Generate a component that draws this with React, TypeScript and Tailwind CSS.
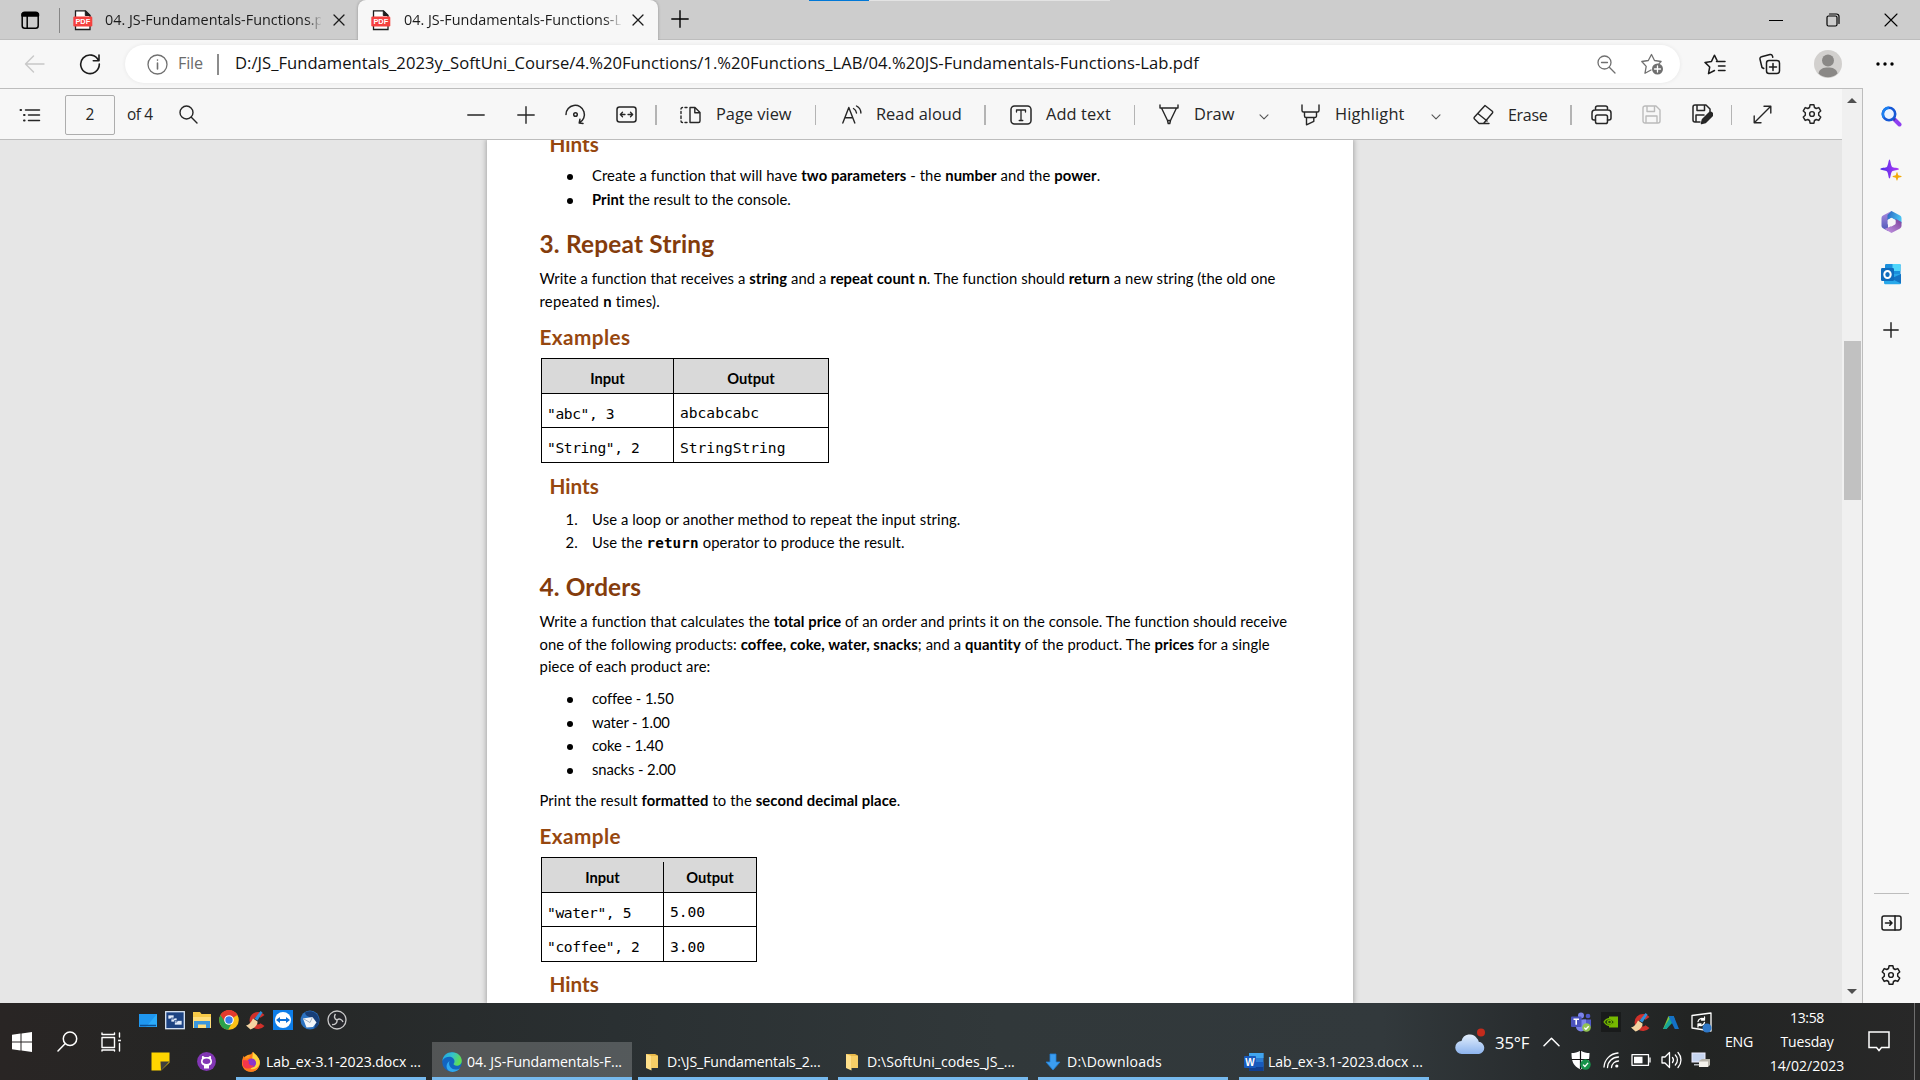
import type { ReactNode } from "react";

type IconProps = { w?: number; h?: number; vb?: string; className?: string; sw?: number; children: ReactNode };

/* Outline icon: strokes take the current text colour. */
function Line({ w = 20, h = 20, vb, className = "", sw = 1.4, children }: IconProps) {
  return (
    <svg width={w} height={h} viewBox={vb ?? `0 0 ${w} ${h}`} fill="none" stroke="currentColor" strokeWidth={sw} strokeLinecap="round" strokeLinejoin="round" className={`shrink-0 ${className}`}>
      {children}
    </svg>
  );
}

/* Filled, multi-colour icon. */
function Art({ w = 20, h = 20, vb, className = "", children }: IconProps) {
  return (
    <svg width={w} height={h} viewBox={vb ?? `0 0 ${w} ${h}`} className={`shrink-0 ${className}`}>
      {children}
    </svg>
  );
}

function PdfIcon({ className = "" }: { className?: string }) {
  return (
    <Art w={20} h={21} className={className}>
      <path d="M2.500 .8h10l4.500 4.500v14.200h-14.500z" fill="#fff" stroke="#1d1d1d" strokeWidth="1.300" />
      <path d="M12.300 .8v4.700h4.700z" fill="#1d1d1d" stroke="#1d1d1d" />
      <rect x="0.300" y="6.500" width="19" height="10" rx="1.200" fill="#f5413f" />
      <text x="9.800" y="14.200" textAnchor="middle" fontSize="7.400" fontWeight="700" fontFamily="Liberation Sans, sans-serif" fill="#fff">PDF</text>
    </Art>
  );
}

function Cross({ className = "" }: { className?: string }) {
  return (
    <Line w={12} h={12} sw={1.3} className={className}>
      <path d="M1 1l10 10M11 1L1 11" />
    </Line>
  );
}

function Gear({ className = "" }: { className?: string }) {
  return (
    <Line w={22} h={22} vb="0 0 24 24" sw={1.6} className={className}>
      <path d="M9.900 2h4.200l.6 2.900 1.900 1.100 2.800-1 2.100 3.700-2.200 1.900v2.800l2.200 1.900-2.100 3.700-2.800-1-1.900 1.100-.6 2.900H9.900l-.6-2.900-1.900-1.100-2.800 1-2.100-3.700 2.200-1.900v-2.800L2.500 8.700 4.600 5l2.800 1 1.900-1.100z" />
      <circle cx="12" cy="12" r="2.600" />
    </Line>
  );
}

function Tabs() {
  return (
    <div className="flex h-10 w-full bg-[#cdcdcd] shadow-[inset_0_-1px_0_#bdbdbd]">
      <div className="flex h-10 w-[358px] items-center">
        <Line w={19} h={19} className="ml-[21px]" sw={1.5}>
          <rect x="1.200" y="1.200" width="16" height="16" rx="2.500" />
          <path d="M1.500 3.200h15.500M1.500 4.500h15.500" strokeWidth="2.600" />
          <path d="M6.200 5v12" />
        </Line>
        <div className="ml-[19px] h-[25px] w-px bg-[#868686]" />
        <PdfIcon className="ml-[13px]" />
        <div className="ml-[12px] w-[216px] overflow-hidden whitespace-nowrap bg-linear-to-r from-[#1b1b1b] from-93% to-[#bdbdbd] to-100% bg-clip-text text-[14.4px] text-transparent">04. JS-Fundamentals-Functions.pdf</div>
        <Cross className="ml-[12px] text-[#1b1b1b]" />
      </div>
      <div className="flex h-10 w-[300px] items-center rounded-t-[8px] bg-[#f7f7f7] shadow-[0_0_3px_rgba(0,0,0,0.300)] [clip-path:inset(-4px_-4px_0_-4px)]">
        <PdfIcon className="ml-[13px]" />
        <div className="ml-[13px] w-[217px] overflow-hidden whitespace-nowrap bg-linear-to-r from-[#1b1b1b] from-92% to-[#e7e7e7] to-100% bg-clip-text text-[14.4px] text-transparent">04. JS-Fundamentals-Functions-Lab.pdf</div>
        <Cross className="ml-[11px] text-[#1b1b1b]" />
      </div>
      <Line w={18} h={18} className="ml-[13px] mt-[10px]" sw={1.4}>
        <path d="M9 .8v16.400M.8 9h16.400" />
      </Line>
      <div className="ml-[120px] h-px w-[60px] bg-[#0078d7]" />
      <div className="h-px w-[241px] bg-[#e3e3e3]" />
      <div className="ml-auto mr-[22px] flex items-center">
        <div className="h-px w-[14px] bg-black" />
        <Line w={14} h={14} className="ml-[43px]" sw={1.2}>
          <rect x="1" y="3" width="10" height="10" rx="1.500" />
          <path d="M3.500 1h7a2.500 2.500 0 0 1 2.500 2.500v7" />
        </Line>
        <Line w={14} h={14} className="ml-[44px]" sw={1.1}>
          <path d="M1 1l12 12M13 1L1 13" />
        </Line>
      </div>
    </div>
  );
}

function AddressRow() {
  return (
    <div className="flex h-[48px] items-center bg-[#f7f7f7]">
      <Line w={21} h={18} className="ml-[24px] text-[#c8c8c8]" sw={1.4}>
        <path d="M20 9H1.500M9.500 1L1.500 9l8 8" />
      </Line>
      <Line w={22} h={22} className="ml-[34px] text-[#1b1b1b]" sw={1.6}>
        <path d="M19.500 7.500A9.300 9.300 0 1 0 20.300 11M20 2v5.700h-5.700" />
      </Line>
      <div className="ml-[24px] flex h-[38px] w-[1555px] items-center rounded-full bg-white shadow-[0_0_4px_rgba(0,0,0,0.070)]">
        <Line w={21} h={21} className="ml-[22px] text-[#707070]" sw={1.3}>
          <circle cx="10.500" cy="10.500" r="9.500" />
          <path d="M10.500 9v6M10.500 6v.1" strokeWidth="1.600" />
        </Line>
        <span className="-mt-px ml-[10px] w-[26px] text-[16.2px] tracking-[-0.2px] text-[#6b6b6b]">File</span>
        <div className="ml-[13px] h-[21px] w-[2px] bg-[#8c8c8c]" />
        <span className="-mt-px ml-[16px] whitespace-nowrap text-[16.6px] tracking-[0.022px] text-[#111]">D:/JS_Fundamentals_2023y_SoftUni_Course/4.%20Functions/1.%20Functions_LAB/04.%20JS-Fundamentals-Functions-Lab.pdf</span>
        <Line w={19} h={19} className="ml-auto mr-[25px] text-[#707070]" sw={1.3}>
          <circle cx="7.500" cy="7.500" r="6.500" />
          <path d="M4.500 7.500h6M12.300 12.300l5.700 5.700" />
        </Line>
        <Line w={23} h={22} className="mr-[16px] text-[#707070]" sw={1.3}>
          <path d="M10 17l-6 3.200 1.200-6.800L.8 8.500l6.500-1L10.500 1.500l3 6 6.600 1-2 2" />
          <circle cx="16.500" cy="16" r="5.500" fill="#707070" stroke="none" />
          <path d="M16.500 13v6M13.500 16h6" stroke="#fff" />
        </Line>
      </div>
      <Line w={22} h={21} className="ml-[24px] text-[#1b1b1b]" sw={1.5}>
        <path d="M12.500 7.500h8.500M14.500 12h6.500M14.500 16.500h6.500M10.500 16.500l-6 3.200 1.200-6.700-4.700-4.600 6.500-1L10.400 1.200l2.600 5.200" />
      </Line>
      <Line w={22} h={22} className="ml-[33px] text-[#1b1b1b]" sw={1.5}>
        <rect x="7.500" y="7.500" width="13" height="13" rx="2.500" />
        <path d="M14 10.500v7M10.500 14h7M4.800 15.500L3 14.500 1 6.200a2 2 0 0 1 1.500-2.400l8.500-2.300a2 2 0 0 1 2.400 1.400l.4 1.400" />
      </Line>
      <Art w={28} h={28} className="ml-[33px]">
        <circle cx="14" cy="14" r="14" fill="#d2d0ce" />
        <circle cx="14" cy="10.500" r="6" fill="#8a8886" />
        <path d="M4.500 23.500c1-5 5-6 9.500-6s8.500 1 9.500 6a14 14 0 0 1-19 0z" fill="#8a8886" />
      </Art>
      <Art w={18} h={4} className="ml-[34px]">
        <circle cx="2" cy="2" r="1.700" />
        <circle cx="9" cy="2" r="1.700" />
        <circle cx="16" cy="2" r="1.700" />
      </Art>
    </div>
  );
}

function Sep({ className = "" }: { className?: string }) {
  return <div className={`h-[20px] shrink-0 bg-[#b4b4b4] ${className}`} />;
}

function Chevron({ className = "" }: { className?: string }) {
  return (
    <Line w={10} h={6} sw={1.1} className={`text-[#555] ${className}`}>
      <path d="M1 .8l4 4 4-4" />
    </Line>
  );
}

function PdfToolbar() {
  return (
    <div className="flex h-[51px] items-center whitespace-nowrap border-b border-[#bdbdbd] bg-[#f7f7f7] pt-px text-[16.4px] text-[#262626]">
      <Line w={22} h={14} className="ml-[19px]" sw={1.5}>
        <path d="M6.500 2h14M9.500 7h11M9.500 12.500h11" />
        <path d="M1.500 2h.6M5 7h.6M5 12.500h.6" strokeWidth="2" />
      </Line>
      <div className="ml-[24px] flex h-[40px] w-[50px] items-center justify-center rounded-[2px] border border-[#adadad] text-[15.5px]">2</div>
      <span className="ml-[12px] w-[27px] text-[15.4px] tracking-[-0.4px]">of 4</span>
      <Line w={19} h={19} className="ml-[25px]" sw={1.4}>
        <circle cx="7.500" cy="7.500" r="6.500" />
        <path d="M12.300 12.300l5.700 5.700" />
      </Line>
      <Line w={18} h={18} className="ml-[269px]">
        <path d="M.8 9h16.400" />
      </Line>
      <Line w={18} h={18} className="ml-[32px]">
        <path d="M9 .8v16.400M.8 9h16.400" />
      </Line>
      <Line w={21} h={21} className="ml-[30px]" sw={1.5}>
        <path d="M1 10.500a9.200 9.200 0 1 1 13.500 8.200M18 19.500l-3.800-.4.700-3.800" />
        <circle cx="10.500" cy="10.500" r="1.800" />
      </Line>
      <Line w={21} h={17} className="ml-[30px]" sw={1.5}>
        <rect x="1" y="1" width="19" height="15" rx="2.500" />
        <path d="M4.500 8.500h4.500M12 8.500h4.500M6.500 6.300L4.300 8.500l2.200 2.200M14.500 6.300l2.200 2.200-2.200 2.200" strokeWidth="1.300" />
      </Line>
      <Sep className="ml-[18px] w-[2px]" />
      <Line w={21} h={18} className="ml-[23px]" sw={1.4}>
        <path d="M10 1.500v15h8.500a1.500 1.500 0 0 0 1.500-1.500V6.500L15 1.500zM14.800 1.500v5.300H20" />
        <path d="M7 1.500H5M2.500 1.500A1.500 1.500 0 0 0 1 3M1 5.500v2M1 10v2.500M1 15a1.500 1.500 0 0 0 1.500 1.500M5 16.500h2" />
      </Line>
      <span className="ml-[15px] w-[78px]">Page view</span>
      <Sep className="ml-[21px] w-px" />
      <Line w={20} h={19} className="ml-[26px]" sw={1.4}>
        <path d="M.8 18L6.800 2.500 12.800 18M2.800 12.700h8M11.500 3.500c1.800 1 2.800 2.400 3 4.500M14.500 1c2.700 1.400 4.300 4 4.400 7" />
      </Line>
      <span className="ml-[14px] w-[87px]">Read aloud</span>
      <Sep className="ml-[21px] w-[2px]" />
      <Line w={22} h={20} className="ml-[24px]" sw={1.5}>
        <rect x="1" y="1" width="20" height="18" rx="3.500" />
        <path d="M6.500 7V5h9v2M11 5v10.500M9.200 15.500h3.600" strokeWidth="1.300" />
      </Line>
      <span className="ml-[14px] w-[66px] tracking-[0.1px]">Add text</span>
      <Sep className="ml-[22px] w-px" />
      <Line w={20} h={21} className="ml-[24px]" sw={1.4}>
        <path d="M1 1v3h18V1M2.500 4l6 12.500h3L17.500 4M8.500 16.500l.7 3h1.600l.7-3" />
      </Line>
      <span className="ml-[15px] w-[41px]">Draw</span>
      <Chevron className="ml-[24px] mt-[4px]" />
      <Line w={19} h={22} className="ml-[32px]" sw={1.4}>
        <path d="M1 1v5.500A1.500 1.500 0 0 0 2.500 8h14A1.500 1.500 0 0 0 18 6.500V1M3.500 8v4a1.500 1.500 0 0 0 1.500 1.500h9a1.500 1.500 0 0 0 1.500-1.500V8M5.500 13.500v7.300l7.300-3.500v-3.800" />
      </Line>
      <span className="ml-[15px] w-[71px] tracking-[0.150px]">Highlight</span>
      <Chevron className="ml-[25px] mt-[4px]" />
      <Line w={21} h={21} className="ml-[32px]" sw={1.4}>
        <path d="M12 1.500l7.300 5.800a1.200 1.200 0 0 1 .1 1.700L10.500 19.500H6L1.500 15a1.500 1.500 0 0 1 0-2zM4.800 9.500l9.300 7.500M6 19.500h10" />
      </Line>
      <span className="ml-[14px] w-[40px] text-[16px] tracking-[-0.3px]">Erase</span>
      <Sep className="ml-[22px] w-[2px]" />
      <Line w={21} h={20} className="ml-[19px]" sw={1.5}>
        <path d="M4.500 5V3a2 2 0 0 1 2-2h8a2 2 0 0 1 2 2v2M4.500 15H3a2 2 0 0 1-2-2V8a3 3 0 0 1 3-3h13a3 3 0 0 1 3 3v5a2 2 0 0 1-2 2h-1.500" />
        <rect x="4.500" y="10" width="12" height="8.500" rx="1.800" />
      </Line>
      <Line w={19} h={19} className="ml-[30px] text-[#bbb]" sw={1.4}>
        <path d="M3 1h11l4 4v11a2 2 0 0 1-2 2H3a2 2 0 0 1-2-2V3a2 2 0 0 1 2-2zM5 1v5.500h7.500V1M4 18v-7h11v7" />
      </Line>
      <Line w={21} h={21} className="ml-[31px]" sw={1.5}>
        <path d="M8 18H3a2 2 0 0 1-2-2V3a2 2 0 0 1 2-2h11l4 4v4M5 1v5.500h7.500V1M4 18v-7h8" />
        <path d="M9.500 19.500l1-4 6.500-6.500a2 2 0 0 1 3 3l-6.500 6.500z" fill="#262626" />
      </Line>
      <Sep className="ml-[18px] w-px" />
      <Line w={19} h={19} className="ml-[21px]" sw={1.4}>
        <path d="M1.500 17.500l16-16M11 1.200h6.800V8M1.200 11v6.800H8" />
      </Line>
      <Gear className="-mt-px ml-[29px]" />
    </div>
  );
}

function Para({ className, children }: { className: string; children: ReactNode }) {
  return <p className={`h-[23px] whitespace-nowrap text-[14.8px] leading-[23px] text-black ${className}`}>{children}</p>;
}

function Item({ mark, className, children }: { mark?: string; className: string; children: ReactNode }) {
  return (
    <div className={`flex h-[23px] whitespace-nowrap text-[14.8px] leading-[23px] text-black ${className}`}>
      <div className="ml-[26px] flex w-[26.5px] shrink-0 items-center">
        {mark ? mark : <div className="mt-[2px] ml-px size-[6px] rounded-full bg-black" />}
      </div>
      <div>{children}</div>
    </div>
  );
}

function Title({ className, children }: { className: string; children: ReactNode }) {
  return <h2 className={`h-[30px] whitespace-nowrap text-[24.4px] font-bold leading-[30px] text-[#843c0c] ${className}`}>{children}</h2>;
}

function Sub({ className, children }: { className: string; children: ReactNode }) {
  return <h3 className={`h-[26px] whitespace-nowrap text-[20.7px] font-bold leading-[26px] text-[#96470f] ${className}`}>{children}</h3>;
}

function Sample({ cols, rows, notch }: { cols: string; rows: string[][]; notch?: boolean }) {
  return (
    <div className={`mt-[8px] ml-[1.500px] grid w-fit grid-rows-[35px_34px_35px] border-t border-l border-black ${cols}`}>
      <div className="relative flex items-center justify-center border-r border-b border-black bg-[#d9d9d9] pt-[4px] text-[14.7px] font-bold">
        Input
        {notch && <div className="absolute -right-px top-0 h-[4px] w-px bg-[#d9d9d9]" />}
      </div>
      <div className="flex items-center justify-center border-r border-b border-black bg-[#d9d9d9] pt-[4px] text-[14.7px] font-bold">Output</div>
      {rows.map(([input, output], i) => [
        <div key={input} className={`flex items-center whitespace-pre border-r border-b border-black pl-[5px] font-['DejaVu_Sans_Mono',monospace] text-[14.6px] tracking-[-0.380px] ${i === 0 ? "pt-[7px]" : "pt-[5px]"}`}>{input}</div>,
        <div key={output} className="flex items-center whitespace-pre border-r border-b border-black pl-[6px] pt-[5px] font-['DejaVu_Sans_Mono',monospace] text-[14.6px]">{output}</div>,
      ])}
    </div>
  );
}

function Document() {
  return (
    <div className="flex h-[863px] justify-start overflow-hidden bg-[#e6e6e6] pl-[487px]">
      <div className="h-[863px] w-[866px] bg-white pl-[52.5px] font-['Lato',sans-serif] shadow-[0_0_5px_1px_rgba(0,0,0,0.280)] [font-variant-ligatures:none]">
        <Sub className="-mt-[9px] ml-[10px]">Hints</Sub>
        <Item className="mt-[7px] tracking-[0.095px]">Create a function that will have <b>two parameters</b> - the <b>number</b> and the <b>power</b>.</Item>
        <Item className="mt-px tracking-[0.060px]"><b>Print</b> the result to the console.</Item>
        <Title className="mt-[18px] tracking-[0.2px]">3. Repeat String</Title>
        <Para className="mt-[8px] tracking-[0.072px]">Write a function that receives a <b>string</b> and a <b>repeat count n</b>. The function should <b>return</b> a new string (the old one</Para>
        <Para className="tracking-[0.250px]">repeated <b>n</b> times).</Para>
        <Sub className="mt-[11px] tracking-[0.450px]">Examples</Sub>
        <Sample cols="grid-cols-[132px_155px]" rows={[['"abc", 3', "abcabcabc"], ['"String", 2', "StringString"]]} />
        <Sub className="mt-[10px] ml-[10px]">Hints</Sub>
        <Item mark="1." className="mt-[9px] tracking-[0.1px]">Use a loop or another method to repeat the input string.</Item>
        <Item mark="2." className="tracking-[0.1px]">Use the <b className="font-['DejaVu_Sans_Mono',monospace] text-[14.3px]">return</b> operator to produce the result.</Item>
        <Title className="mt-[18px] tracking-[0.1px]">4. Orders</Title>
        <Para className="mt-[8px] tracking-[0.062px]">Write a function that calculates the <b>total price</b> of an order and prints it on the console. The function should receive</Para>
        <Para className="tracking-[0.090px]">one of the following products: <b>coffee, coke, water, snacks</b>; and a <b>quantity</b> of the product. The <b>prices</b> for a single</Para>
        <Para className="-mt-px tracking-[0.120px]">piece of each product are:</Para>
        <Item className="mt-[9px] tracking-[-0.120px]">coffee - 1.50</Item>
        <Item className="mt-px tracking-[-0.120px]">water - 1.00</Item>
        <Item className="tracking-[-0.120px]">coke - 1.40</Item>
        <Item className="mt-px tracking-[-0.120px]">snacks - 2.00</Item>
        <Para className="mt-[8px] tracking-[0.1px]">Print the result <b>formatted</b> to the <b>second decimal place</b>.</Para>
        <Sub className="mt-[11px] tracking-[0.450px]">Example</Sub>
        <Sample notch cols="grid-cols-[122px_93px]" rows={[['"water", 5', "5.00"], ['"coffee", 2', "3.00"]]} />
        <Sub className="mt-[9px] ml-[10px]">Hints</Sub>
      </div>
    </div>
  );
}

function ScrollBar() {
  return (
    <div className="flex h-full w-[20px] flex-col items-center bg-[#f0f0f0]">
      <div className="mt-[9px] border-x-5 border-b-5 border-x-transparent border-b-[#505050]" />
      <div className="mt-[238px] h-[159px] w-[17px] bg-[#c1c1c1]" />
      <div className="mb-[9px] mt-auto border-x-5 border-t-5 border-x-transparent border-t-[#505050]" />
    </div>
  );
}

function SideRail() {
  return (
    <div className="flex h-[915px] w-[57px] flex-col items-center bg-[#f7f7f7] pr-px text-[#1b1b1b]">
      <Art w={21} h={21} className="mt-[18px]">
        <path d="M12.500 12.500l6 6" stroke="#8f3ff0" strokeWidth="4" strokeLinecap="round" />
        <path d="M12 12l2 2" stroke="#3b3b9a" strokeWidth="2.500" />
        <circle cx="8" cy="8" r="6.200" fill="#eaf3ff" stroke="#1558d6" strokeWidth="2.600" />
        <path d="M3 11.500A6.200 6.200 0 0 1 8 1.800" fill="none" stroke="#1b7ff0" strokeWidth="2.400" />
      </Art>
      <Art w={22} h={22} className="mt-[32px]">
        <defs>
          <linearGradient id="spark" x1="0" y1="0" x2="1" y2="0">
            <stop offset="0" stopColor="#4b2ce8" />
            <stop offset="1" stopColor="#b23bf5" />
          </linearGradient>
        </defs>
        <path d="M9.500.5c1 0 1.300 6 2.500 7.200 1.200 1.200 7 1 7 2.300s-5.800 1.200-7 2.400c-1.200 1.200-1.500 7.100-2.500 7.100s-1.300-5.900-2.500-7.100C5.800 11.200.3 11.300.3 10s5.500-1.100 6.700-2.300C8.200 6.500 8.500.5 9.500.5z" fill="url(#spark)" />
        <path d="M17 13c.6 0 .8 2.700 1.300 3.200s3.400.6 3.400 1.300-2.900.8-3.400 1.300-.7 3-1.300 3-.8-2.500-1.300-3-3.200-.6-3.200-1.300 2.700-.8 3.200-1.300.7-3.200 1.300-3.200z" fill="#f2ab0c" />
      </Art>
      <Art w={21} h={22} className="mt-[30px]">
        <defs>
          <linearGradient id="ringTop" x1="0" y1="0" x2="1" y2="0.300">
            <stop offset="0" stopColor="#2b62bf" />
            <stop offset="1" stopColor="#48c1f2" />
          </linearGradient>
          <linearGradient id="ringLeft" x1="0" y1="0" x2="0" y2="1">
            <stop offset="0" stopColor="#b08ae0" />
            <stop offset="1" stopColor="#4a58b8" />
          </linearGradient>
          <linearGradient id="ringLow" x1="1" y1="0" x2="0" y2="1">
            <stop offset="0" stopColor="#7a3f98" />
            <stop offset="1" stopColor="#c79be8" />
          </linearGradient>
        </defs>
        <path d="M10.500 0L2 4.600Q.5 5.500.5 7v8q0 1.500 1.500 2.300L7 20V8.500l5-3.300z" fill="url(#ringLeft)" />
        <path d="M10.500 0L19 4.600Q20.500 5.500 20.500 7v5.500L14 9 10.500 7 6.500 9V4z" fill="url(#ringTop)" />
        <path d="M20.500 11v4q0 1.500-1.500 2.400L10.500 22 3.500 18l7-3 4-2.500V7.800z" fill="url(#ringLow)" />
        <path d="M10.500 6.700l3.900 2.200v4.400l-3.900 2.200-3.900-2.200V8.900z" fill="#f7f7f7" />
      </Art>
      <Art w={22} h={22} className="mt-[30px]">
        <rect x="5" y="1" width="15.500" height="15" rx="1.200" fill="#1a8fdc" />
        <rect x="12.500" y="1" width="8" height="7" fill="#4fd6fb" />
        <path d="M4 11l17 0v9a1.200 1.200 0 0 1-1.200 1.200H5A1.200 1.200 0 0 1 4 20z" fill="#28a8ea" />
        <path d="M21 11v9.500L11 15.500z" fill="#1373c4" />
        <rect x="1" y="5" width="13" height="13" rx="1.200" fill="#0f6cbd" />
        <ellipse cx="7.500" cy="11.500" rx="3.200" ry="3.600" fill="none" stroke="#fff" strokeWidth="2" />
      </Art>
      <Line w={16} h={16} className="mt-[37px]" sw={1.4}>
        <path d="M8 .8v14.400M.8 8h14.400" />
      </Line>
      <div className="mt-auto h-px w-[35px] bg-[#bdbdbd]" />
      <Line w={21} h={16} className="mt-[21px]" sw={1.5}>
        <rect x="1" y="1" width="19" height="14" rx="2" />
        <path d="M14 1v14" />
        <path d="M4.500 8h6.500M8.800 5.800L11 8l-2.200 2.200" strokeWidth="1.600" />
      </Line>
      <Gear className="mt-[33px] mb-[17px]" />
    </div>
  );
}

function Folder() {
  return (
    <Art w={14} h={18}>
      <path d="M1 1h9l3 1.500V15H6z" fill="#e9b94a" />
      <path d="M1 1l5.500 2v14.500L1 15z" fill="#ffe08a" />
      <path d="M6.500 3H13v12H6.500z" fill="#f8cf66" />
    </Art>
  );
}

function CCleaner() {
  return (
    <Art w={20} h={20}>
      <path d="M18.500 5A8.500 8.500 0 1 0 18.500 16l-4-2.800a3.800 3.800 0 1 1 0-5.500z" fill="#d0302a" />
      <path d="M14.500 1l2 1.500-5 8-3-1.800z" fill="#2f8fd8" />
      <path d="M7 8.500l4.500 3c.5 3-3 7-7 8L0 15.500c3-.5 5-3 7-7z" fill="#f3d3a2" />
    </Art>
  );
}

function Task({ className = "", label, gap, children }: { className?: string; label: string; gap: string; children: ReactNode }) {
  return (
    <div className={`flex h-[38px] shrink-0 items-center whitespace-nowrap pt-px text-[14.1px] tracking-[-0.050px] text-white shadow-[inset_0_-3px_0_#76b9ed] ${className}`}>
      {children}
      <span className={gap}>{label}</span>
    </div>
  );
}

function QuickLaunch() {
  return (
    <div className="flex h-[33px] items-center gap-[7px] pl-[14px]">
      <Art w={20} h={20}>
        <path d="M1 4h18v13H1z" fill="#1f97f0" />
        <path d="M19 4L8 17h11z" fill="#2bacfa" />
        <path d="M2 15.500h16" stroke="#0b4f94" strokeWidth="1.500" />
      </Art>
      <Art w={20} h={20}>
        <rect x=".7" y="1.700" width="18.600" height="17" fill="#1d4382" stroke="#dbe6f5" strokeWidth="1.300" />
        <path d="M3 5h6v4H3zM6 8h6v4H6zM9.500 10.500H17V15H9.500z" fill="#dfe9f8" stroke="#1d4382" strokeWidth=".7" />
      </Art>
      <Art w={20} h={20}>
        <path d="M1 2h7l1.500 2H19v14H1z" fill="#f7c948" />
        <path d="M1 7h18v11H1z" fill="#ffdd7a" />
        <path d="M2 18v-7h16v7h-4v-3.500H6V18z" fill="#3a96dd" />
      </Art>
      <Art w={20} h={20}>
        <circle cx="10" cy="10" r="9.800" fill="#fbc116" />
        <path d="M10 10L1.500 5.100A9.800 9.800 0 0 1 18.500 5.100z" fill="#e33b2e" />
        <path d="M10 10H6L1.500 5.100a9.800 9.800 0 0 0 7.600 14.700L13 13z" fill="#2ba24c" />
        <path d="M1.500 5.100L6 12l4-7.500h8.200A9.800 9.800 0 0 0 1.500 5.100z" fill="#e33b2e" />
        <circle cx="10" cy="10" r="4.800" fill="#fff" />
        <circle cx="10" cy="10" r="3.700" fill="#3a7cec" />
      </Art>
      <CCleaner />
      <Art w={20} h={20}>
        <rect width="20" height="20" fill="#0d7de8" />
        <circle cx="10" cy="10" r="8" fill="#fff" />
        <path d="M3 10l4-3v2h6V7l4 3-4 3v-2H7v2z" fill="#0d6fd6" />
      </Art>
      <Art w={20} h={20}>
        <circle cx="10" cy="10" r="9.500" fill="#2b73c2" />
        <path d="M5 2.500c6-3 13 0 14 7 .5 5-2 8.500-5.500 9.500 3-4 2-9-2-11-3-1.500-6-2-6.500-5.500z" fill="#173f78" />
        <path d="M3 8.500L12.500 7l4 5.500-3.500 4.500-6.500.5z" fill="#f2f5f8" />
        <path d="M3 8.500l7 4 2.500-5.500" fill="none" stroke="#9fb2c6" />
      </Art>
      <Art w={20} h={20}>
        <circle cx="10" cy="10" r="9" fill="#26272b" stroke="#c9c9c9" strokeWidth="1.300" />
        <path d="M10 10c-3-1-3-4-1.500-6M10 10c2.500-2 5-.5 6 2M10 10c.5 3-2 5-5 4.500" fill="none" stroke="#c9c9c9" strokeWidth="1.400" />
      </Art>
    </div>
  );
}

function TaskRow() {
  return (
    <div className="flex h-[38px] items-center">
      <Art w={19} h={19} className="ml-[27px]">
        <path d="M.5.5h18v10L10 18.500H.5z" fill="#ffd500" />
        <path d="M9.500 9.500h9L10 18.500z" fill="#3f3f3f" />
      </Art>
      <Art w={19} h={19} className="ml-[27px]">
        <circle cx="9.500" cy="9.500" r="9.400" fill="#8236b4" />
        <path d="M7 16.500v-3c-2-.5-3-2-3-4 0-1.200.4-2.200 1-3-.2-.8-.1-1.800.2-2.500 1 0 1.800.6 2.500 1.100a8 8 0 0 1 3.600 0c.7-.5 1.500-1.100 2.500-1.100.3.700.4 1.700.2 2.500.6.8 1 1.800 1 3 0 2-1 3.500-3 4v3z" fill="#fff" />
        <ellipse cx="9.500" cy="9.300" rx="3.800" ry="2.700" fill="#8236b4" />
      </Art>
      <Task className="ml-[20px] w-[190px] pl-[5px]" gap="ml-[5px]" label="Lab_ex-3.1-2023.docx ...">
        <Art w={20} h={20}>
          <circle cx="10" cy="11" r="8.800" fill="#ff9a1f" />
          <path d="M11.500 0c3.500 2.500 4 4 6 6.500 3.500 6-1 13-7.500 13.200C3 19.800-.5 14 1.500 7l1-3 2 2.500 3.500-.5z" fill="#ff7a1a" />
          <path d="M12 0c3 3 6.500 5 6.800 10.500C18.500 15 14 18 10 17z" fill="#ffd43a" />
          <circle cx="10.500" cy="11" r="4.600" fill="#8a35c9" />
          <path d="M1.500 8c2 .5 4 0 6.500 1-1 3 1 5 5 4.500-2 4-9 4-11 .5z" fill="#f5364b" />
        </Art>
      </Task>
      <Task className="ml-[6px] w-[200px] bg-white/20 pl-[10px]" gap="ml-[5px]" label="04. JS-Fundamentals-F...">
        <Art w={20} h={20}>
          <defs>
            <linearGradient id="edgeTop" x1="0" y1="0" x2="1" y2=".3">
              <stop offset="0" stopColor="#1fa3e8" />
              <stop offset=".55" stopColor="#35c4c9" />
              <stop offset="1" stopColor="#5fdc54" />
            </linearGradient>
          </defs>
          <circle cx="10" cy="10" r="9.800" fill="#1264c0" />
          <path d="M.3 9C1 3.500 5 .2 10 .2c6 0 9.800 4.300 9.800 8.500 0 3.500-2.500 5-5 5-2.200 0-3.300-.8-3.300-1.600 0-.7 1-1 1-2.900 0-2.700-2.500-4.500-5.200-4.500S1.500 6 .3 9z" fill="url(#edgeTop)" />
          <path d="M7.500 9c-1.500 4 1 8.500 6 8.500 2 0 3.500-.5 4.800-1.500-1.800 3-6 4.600-10 3.600C4 18 3 12.500 7.500 9z" fill="#2fa8ee" />
        </Art>
      </Task>
      <Task className="ml-[6px] w-[190px] pl-[7px]" gap="ml-[8px] tracking-[-0.1px]" label="D:\JS_Fundamentals_2...">
        <Folder />
      </Task>
      <Task className="ml-[10px] w-[190px] pl-[7px]" gap="ml-[8px] tracking-[0.030px]" label="D:\SoftUni_codes_JS_...">
        <Folder />
      </Task>
      <Task className="ml-[10px] w-[190px] pl-[7px]" gap="ml-[6px] tracking-[0.2px]" label="D:\Downloads">
        <Art w={16} h={18}>
          <path d="M5 1h6v8h4l-7 8-7-8h4z" fill="#3b9df0" stroke="#1f7fd6" strokeWidth=".8" />
        </Art>
      </Task>
      <Task className="ml-[11px] w-[190px] pl-[5px]" gap="ml-[4px]" label="Lab_ex-3.1-2023.docx ...">
        <Art w={20} h={20}>
          <path d="M5 1h14.500v18H5z" fill="#2b7cd3" />
          <path d="M5 1h14.500v5H5z" fill="#41a5ee" />
          <path d="M5 14.500h14.500V19H5z" fill="#103f91" />
          <path d="M5 10h14.500v4.500H5z" fill="#185abd" />
          <rect y="4" width="12" height="12" rx="1" fill="#185abd" />
          <text x="6" y="13.700" textAnchor="middle" fontSize="10" fontWeight="700" fontFamily="Liberation Sans, sans-serif" fill="#fff">W</text>
        </Art>
      </Task>
    </div>
  );
}

function Tray() {
  return (
    <div className="ml-[11px] grid grid-cols-[repeat(5,20px)] grid-rows-[38px_38px] place-items-center gap-x-[10px] text-white">
      <Art w={20} h={20}>
        <circle cx="10" cy="3.500" r="3" fill="#7b83eb" />
        <circle cx="17" cy="4" r="2.300" fill="#5059c9" />
        <path d="M12 7.500h8v6a4 4 0 0 1-6 3z" fill="#5059c9" />
        <path d="M5 7.500h10v7a5 5 0 0 1-10 0z" fill="#7b83eb" />
        <rect y="4.500" width="10.500" height="10.500" rx="1" fill="#4b53bc" />
        <path d="M2.500 7.300H8M5.200 7.300v5.500" stroke="#fff" strokeWidth="1.600" />
        <circle cx="15.500" cy="15.500" r="4.300" fill="#92c353" />
        <path d="M13.300 15.600l1.600 1.600 2.800-3" fill="none" stroke="#fff" strokeWidth="1.300" />
      </Art>
      <Art w={20} h={20}>
        <rect width="20" height="20" fill="#191b1b" />
        <rect x="8" y="4.500" width="9" height="11" fill="#76b900" />
        <path d="M3 10c3-4.500 7-4.500 10.500 0C10 14.500 6 14.500 3 10z" fill="#2b4a08" stroke="#76b900" strokeWidth="1.200" />
        <circle cx="8.500" cy="10" r="1.900" fill="none" stroke="#76b900" strokeWidth="1.200" />
      </Art>
      <CCleaner />
      <Art w={16} h={20}>
        <path d="M5.500 4L0 17h3.500L8.500 9z" fill="#7fc241" />
        <path d="M8 4h2.500L12 8l-8.500 9H0z" fill="#16a596" />
        <path d="M5.500 4h5.200L16 17h-4.200z" fill="#1471c5" />
      </Art>
      <Line w={21} h={21} sw={1.3}>
        <path d="M1 3.500L20 1v18l-19-3z" />
        <path d="M7 9.500a4 4 0 0 1 6.500-2M13.500 5v3h-3M13.500 10.500a4 4 0 0 1-6.500 2M7 15v-3h3" />
        <circle cx="16" cy="16" r="4.500" fill="#2f78c8" stroke="none" />
      </Line>
      <Art w={20} h={20}>
        <path d="M9.500.5c3 2 6 2.500 9 2.500 0 8-1.500 13-9 16.500C2 16 .5 11 .5 3c3 0 6-.5 9-2.500z" fill="#fff" />
        <path d="M9.500 0v19M.5 9.500h18" stroke="#111" strokeWidth="1.200" />
        <circle cx="14.500" cy="14.500" r="5.200" fill="#17924a" />
        <path d="M12 14.600l1.900 1.900 3.200-3.600" fill="none" stroke="#fff" strokeWidth="1.300" />
      </Art>
      <Line w={18} h={18} sw={1.3}>
        <path d="M2 16A15 15 0 0 1 16 2M5.500 16.500A11 11 0 0 1 16.500 6M9.500 16.500a7 7 0 0 1 7-6.500" />
        <circle cx="14.800" cy="15" r="1.600" fill="#fff" stroke="none" />
      </Line>
      <Line w={20} h={14} sw={1.3}>
        <rect x="1" y="1.700" width="16.500" height="10.600" />
        <path d="M19 5v4" />
        <rect x="3" y="3.700" width="8.500" height="6.600" fill="#fff" stroke="none" />
      </Line>
      <Line w={21} h={18} sw={1.3}>
        <path d="M1 6h3l4.500-4.500v15L4 12H1zM11.500 6.500a4 4 0 0 1 0 5M14.300 4a7 7 0 0 1 0 10M17 1.500a11 11 0 0 1 0 15" />
      </Line>
      <Art w={20} h={20}>
        <rect x="1" y="3" width="13" height="9" fill="#c6d5f0" stroke="#eef" />
        <path d="M3 14h8v1.500H3z" fill="#b8bcc0" />
        <path d="M8 11l3-2h8v6l-2 2H8z" fill="#b9b5ab" />
        <path d="M8 11.500h9V17H8z" fill="#f4f2ec" />
      </Art>
    </div>
  );
}

function TaskBar() {
  return (
    <div className="flex h-[77px] bg-[linear-gradient(90deg,#292524_0%,#252625_12%,#2a3032_32%,#31383a_52%,#32393c_72%,#282c2e_80%,#222423_88%,#282828_100%)]">
      <div className="flex h-[77px] w-[124px] shrink-0 items-center">
        <Art w={20} h={20} className="ml-[12px]">
          <path d="M0 2.800l8.500-1.200v7.900H0zM9.500 1.500L20 0v9.500H9.500zM0 10.500h8.500v7.900L0 17.200zM9.500 10.500H20V20L9.500 18.500z" fill="#fff" />
        </Art>
        <Line w={21} h={21} className="ml-[25px] text-white" sw={1.5}>
          <circle cx="13" cy="7.700" r="6.700" />
          <path d="M8.300 12.500L1 20" />
        </Line>
        <Line w={21} h={20} className="ml-[23px] text-white" sw={1.4}>
          <rect x="1" y="5.500" width="12.500" height="10" />
          <path d="M1 1v1.500h12.500V1M1 19v-1h12.500v1M18.500 1v4M18.500 11.500V19" />
          <path d="M18.500 7.700v1.600" strokeWidth="2.800" strokeLinecap="butt" />
        </Line>
      </div>
      <div className="flex w-[1305px] shrink-0 flex-col gap-[6px]">
        <QuickLaunch />
        <TaskRow />
      </div>
      <div className="ml-[26px] flex items-center text-white">
        <Art w={32} h={28}>
          <defs>
            <linearGradient id="cloud" x1="0" y1="0" x2="0" y2="1">
              <stop offset="0" stopColor="#e2eefc" />
              <stop offset="1" stopColor="#8db4ee" />
            </linearGradient>
          </defs>
          <path d="M7 26a6.500 6.500 0 0 1-.5-13A8.500 8.500 0 0 1 22 10.500c1 1 1.500 2 1.700 3.200A6.200 6.200 0 0 1 24 26z" fill="url(#cloud)" />
          <circle cx="26" cy="4.500" r="4" fill="#c42b1c" />
        </Art>
        <span className="ml-[8px] mt-[2px] w-[36px] text-[16.800px] tracking-[-0.2px]">35°F</span>
        <Line w={17} h={10} sw={1.5} className="ml-[12px]">
          <path d="M1 8.800l7.500-7.500L16 8.800" />
        </Line>
      </div>
      <Tray />
      <span className="ml-[14px] mt-[28px] w-[29px] text-[14.2px] tracking-[-0.3px] text-white">ENG</span>
      <div className="ml-[14px] flex w-[78px] flex-col items-center pt-[3px] text-[14px] leading-[24px] text-white">
        <span className="tracking-[-0.350px]">13:58</span>
        <span className="tracking-[-0.150px]">Tuesday</span>
        <span>14/02/2023</span>
      </div>
      <Line w={22} h={21} sw={1.5} className="ml-auto mr-[24px] mt-[28px] text-white">
        <path d="M1 1h20v15.500h-7.500L11 19.500l-2.500-3H1z" strokeLinejoin="miter" />
      </Line>
      <div className="mr-[5px] h-[77px] w-px bg-[#6e6e6e]" />
    </div>
  );
}

export default function App() {
  return (
    <div className="flex h-[1080px] w-[1920px] flex-col overflow-hidden bg-[#f7f7f7] font-['Open_Sans',sans-serif]">
      <Tabs />
      <AddressRow />
      <div className="flex h-[915px]">
        <div className="flex h-[915px] w-[1863px] border-t border-r border-[#bdbdbd]">
          <div className="w-[1842px] shrink-0">
            <PdfToolbar />
            <Document />
          </div>
          <ScrollBar />
        </div>
        <SideRail />
      </div>
      <TaskBar />
    </div>
  );
}
